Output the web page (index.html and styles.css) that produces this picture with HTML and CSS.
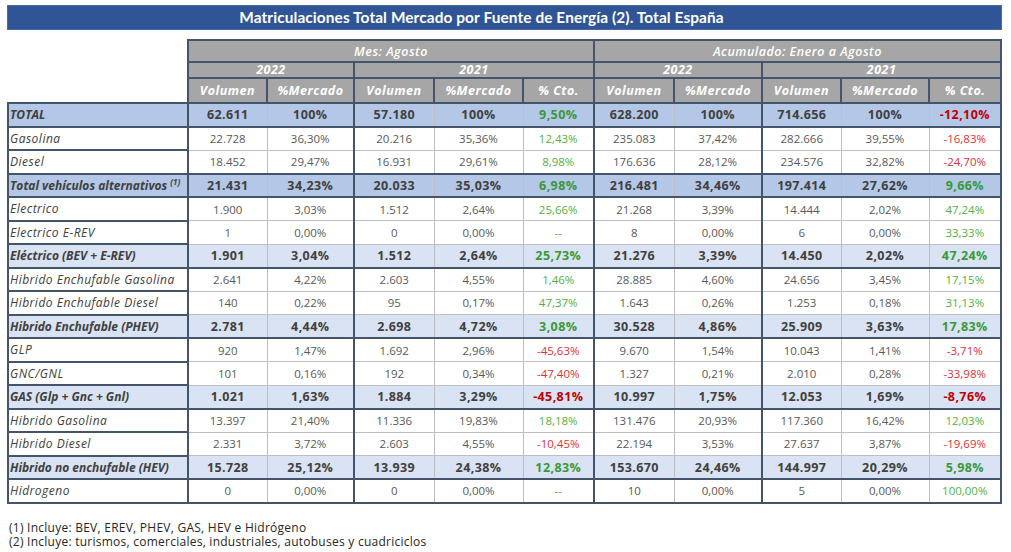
FILE: index.html
```html
<!DOCTYPE html>
<html lang="es">
<head>
<meta charset="utf-8">
<link rel="stylesheet" href="styles.css">
</head>
<body>
<div class="page">
  <div class="title">Matriculaciones Total Mercado por Fuente de Energía (2). Total España</div>
  <table class="grid">
    <colgroup>
      <col class="c-label">
      <col class="c79"><col class="c87"><col class="c80"><col class="c89"><col class="c71">
      <col class="c80"><col class="c88"><col class="c79"><col class="c88"><col class="c72">
    </colgroup>
    <thead>
      <tr class="h1">
        <th class="blank"></th>
        <th colspan="5">Mes: Agosto</th>
        <th colspan="5">Acumulado: Enero a Agosto</th>
      </tr>
      <tr class="h2">
        <th class="blank"></th>
        <th colspan="2">2022</th>
        <th colspan="3">2021</th>
        <th colspan="2">2022</th>
        <th colspan="3">2021</th>
      </tr>
      <tr class="h3">
        <th class="blank"></th>
        <th>Volumen</th><th>%Mercado</th><th>Volumen</th><th>%Mercado</th><th>% Cto.</th>
        <th>Volumen</th><th>%Mercado</th><th>Volumen</th><th>%Mercado</th><th>% Cto.</th>
      </tr>
    </thead>
    <tbody>
      <tr class="tot">
        <td class="lbl">TOTAL</td>
        <td class="g">62.611</td><td>100%</td><td class="g">57.180</td><td>100%</td><td class="up">9,50%</td>
        <td class="g">628.200</td><td>100%</td><td class="g">714.656</td><td>100%</td><td class="dn">-12,10%</td>
      </tr>
      <tr>
        <td class="lbl">Gasolina</td>
        <td class="g">22.728</td><td>36,30%</td><td class="g">20.216</td><td>35,36%</td><td class="up">12,43%</td>
        <td class="g">235.083</td><td>37,42%</td><td class="g">282.666</td><td>39,55%</td><td class="dn">-16,83%</td>
      </tr>
      <tr>
        <td class="lbl">Diesel</td>
        <td class="g">18.452</td><td>29,47%</td><td class="g">16.931</td><td>29,61%</td><td class="up">8,98%</td>
        <td class="g">176.636</td><td>28,12%</td><td class="g">234.576</td><td>32,82%</td><td class="dn">-24,70%</td>
      </tr>
      <tr class="tot">
        <td class="lbl">Total vehículos alternativos <sup>(1)</sup></td>
        <td class="g">21.431</td><td>34,23%</td><td class="g">20.033</td><td>35,03%</td><td class="up">6,98%</td>
        <td class="g">216.481</td><td>34,46%</td><td class="g">197.414</td><td>27,62%</td><td class="up">9,66%</td>
      </tr>
      <tr>
        <td class="lbl">Electrico</td>
        <td class="g">1.900</td><td>3,03%</td><td class="g">1.512</td><td>2,64%</td><td class="up">25,66%</td>
        <td class="g">21.268</td><td>3,39%</td><td class="g">14.444</td><td>2,02%</td><td class="up">47,24%</td>
      </tr>
      <tr>
        <td class="lbl">Electrico E-REV</td>
        <td class="g">1</td><td>0,00%</td><td class="g">0</td><td>0,00%</td><td class="up">--</td>
        <td class="g">8</td><td>0,00%</td><td class="g">6</td><td>0,00%</td><td class="up">33,33%</td>
      </tr>
      <tr class="sub">
        <td class="lbl">Eléctrico (BEV + E-REV)</td>
        <td class="g">1.901</td><td>3,04%</td><td class="g">1.512</td><td>2,64%</td><td class="up">25,73%</td>
        <td class="g">21.276</td><td>3,39%</td><td class="g">14.450</td><td>2,02%</td><td class="up">47,24%</td>
      </tr>
      <tr>
        <td class="lbl">Hibrido Enchufable Gasolina</td>
        <td class="g">2.641</td><td>4,22%</td><td class="g">2.603</td><td>4,55%</td><td class="up">1,46%</td>
        <td class="g">28.885</td><td>4,60%</td><td class="g">24.656</td><td>3,45%</td><td class="up">17,15%</td>
      </tr>
      <tr>
        <td class="lbl">Hibrido Enchufable Diesel</td>
        <td class="g">140</td><td>0,22%</td><td class="g">95</td><td>0,17%</td><td class="up">47,37%</td>
        <td class="g">1.643</td><td>0,26%</td><td class="g">1.253</td><td>0,18%</td><td class="up">31,13%</td>
      </tr>
      <tr class="sub">
        <td class="lbl">Hibrido Enchufable (PHEV)</td>
        <td class="g">2.781</td><td>4,44%</td><td class="g">2.698</td><td>4,72%</td><td class="up">3,08%</td>
        <td class="g">30.528</td><td>4,86%</td><td class="g">25.909</td><td>3,63%</td><td class="up">17,83%</td>
      </tr>
      <tr>
        <td class="lbl">GLP</td>
        <td class="g">920</td><td>1,47%</td><td class="g">1.692</td><td>2,96%</td><td class="dn">-45,63%</td>
        <td class="g">9.670</td><td>1,54%</td><td class="g">10.043</td><td>1,41%</td><td class="dn">-3,71%</td>
      </tr>
      <tr>
        <td class="lbl">GNC/GNL</td>
        <td class="g">101</td><td>0,16%</td><td class="g">192</td><td>0,34%</td><td class="dn">-47,40%</td>
        <td class="g">1.327</td><td>0,21%</td><td class="g">2.010</td><td>0,28%</td><td class="dn">-33,98%</td>
      </tr>
      <tr class="sub">
        <td class="lbl">GAS (Glp + Gnc + Gnl)</td>
        <td class="g">1.021</td><td>1,63%</td><td class="g">1.884</td><td>3,29%</td><td class="dn">-45,81%</td>
        <td class="g">10.997</td><td>1,75%</td><td class="g">12.053</td><td>1,69%</td><td class="dn">-8,76%</td>
      </tr>
      <tr>
        <td class="lbl">Hibrido Gasolina</td>
        <td class="g">13.397</td><td>21,40%</td><td class="g">11.336</td><td>19,83%</td><td class="up">18,18%</td>
        <td class="g">131.476</td><td>20,93%</td><td class="g">117.360</td><td>16,42%</td><td class="up">12,03%</td>
      </tr>
      <tr>
        <td class="lbl">Hibrido Diesel</td>
        <td class="g">2.331</td><td>3,72%</td><td class="g">2.603</td><td>4,55%</td><td class="dn">-10,45%</td>
        <td class="g">22.194</td><td>3,53%</td><td class="g">27.637</td><td>3,87%</td><td class="dn">-19,69%</td>
      </tr>
      <tr class="sub">
        <td class="lbl">Hibrido no enchufable (HEV)</td>
        <td class="g">15.728</td><td>25,12%</td><td class="g">13.939</td><td>24,38%</td><td class="up">12,83%</td>
        <td class="g">153.670</td><td>24,46%</td><td class="g">144.997</td><td>20,29%</td><td class="up">5,98%</td>
      </tr>
      <tr class="last">
        <td class="lbl">Hidrogeno</td>
        <td class="g">0</td><td>0,00%</td><td class="g">0</td><td>0,00%</td><td class="up">--</td>
        <td class="g">10</td><td>0,00%</td><td class="g">5</td><td>0,00%</td><td class="up">100,00%</td>
      </tr>
    </tbody>
  </table>
  <div class="notes">
    <p>(1) Incluye: BEV, EREV, PHEV, GAS, HEV e Hidrógeno</p>
    <p>(2) Incluye: turismos, comerciales, industriales, autobuses y cuadriciclos</p>
  </div>
</div>
</body>
</html>
```

FILE: styles.css
```css
html, body {
  margin: 0;
  padding: 0;
  background: #ffffff;
}

.page {
  padding: 5px 9px 0 7px;
  font-family: "Open Sans", "Liberation Sans", sans-serif;
}

.title {
  height: 25px;
  box-sizing: border-box;
  padding-right: 46px;
  background: #2f5597;
  border: 1px solid #4a6aa8;
  color: #ffffff;
  font-family: Lato, "Open Sans", sans-serif;
  font-weight: 700;
  font-size: 15.4px;
  line-height: 23px;
  text-align: center;
  letter-spacing: 0.1px;
}

.grid {
  margin-top: 9px;
  width: 993px;
  border-collapse: collapse;
  table-layout: fixed;
  font-size: 11.5px;
  color: #595959;
}

.c-label { width: 180px; }
.c79 { width: 79px; }
.c87 { width: 87px; }
.c80 { width: 80px; }
.c89 { width: 89px; }
.c71 { width: 71px; }
.c88 { width: 88px; }
.c72 { width: 72px; }

.grid th {
  background: #a6a6a6;
  color: #ffffff;
  font-style: italic;
  font-weight: 700;
  font-size: 12.5px;
  letter-spacing: 0.5px;
  border: 2px solid #44546a;
  padding: 0;
  text-align: center;
}

.grid th.blank {
  background: #ffffff;
  border: none;
}

.h1 th { height: 20px; font-weight: 600; }
.h2 th { height: 14px; line-height: 14px; }
.h3 th { height: 23px; }

.grid td {
  height: 21.5px;
  padding: 0;
  text-align: center;
  border: 1px solid #bfbfbf;
  white-space: nowrap;
}

.grid td.g {
  border-left: 2px solid #44546a;
}

.grid td:last-child {
  border-right: 2px solid #44546a;
}

.grid td.lbl {
  text-align: left;
  padding-left: 1px;
  font-style: italic;
  font-size: 12px;
  letter-spacing: 0.5px;
  color: #404040;
  border: 2px solid #44546a;
}

.grid sup {
  font-size: 8px;
  line-height: 0;
  vertical-align: 5px;
}

.tot td {
  background: #b4c7e7;
  font-weight: 700;
  font-size: 12.5px;
  letter-spacing: 0.4px;
  color: #404040;
  border-top: 2px solid #44546a;
  border-bottom: 2px solid #44546a;
}

.sub td {
  background: #dae3f3;
  font-weight: 700;
  font-size: 12.5px;
  letter-spacing: 0.4px;
  color: #404040;
  border-bottom: 2px solid #44546a;
}

.tot td.lbl, .sub td.lbl {
  font-weight: 700;
  font-size: 12px;
  letter-spacing: 0;
}

.last td {
  border-bottom: 2px solid #44546a;
}

.grid td.up { color: #55b043; }
.grid td.dn { color: #e0303a; }
.tot td.up, .sub td.up { color: #38993a; }
.tot td.dn, .sub td.dn { color: #c00000; }

.notes {
  margin-top: 17px;
  padding-left: 2px;
  font-size: 12px;
  letter-spacing: 0.25px;
  color: #262626;
}

.notes p {
  margin: 0;
  line-height: 14px;
}
```
